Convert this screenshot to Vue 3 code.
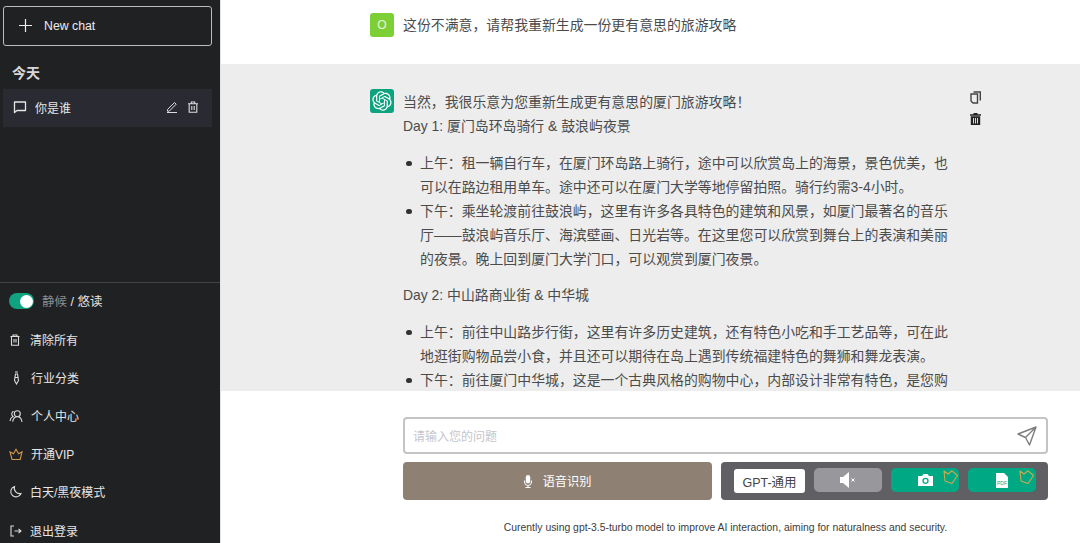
<script setup>
const menu = [
  { label: '清除所有', icon: 'trash', gap: 'g1' },
  { label: '行业分类', icon: 'tie', gap: 'g3' },
  { label: '个人中心', icon: 'user', gap: 'g2' },
  { label: '开通VIP', icon: 'crown', gap: 'g2' },
  { label: '白天/黑夜模式', icon: 'moon', gap: 'g1' },
  { label: '退出登录', icon: 'logout', gap: 'g1' }
]
const logo = 'M37.5324 16.8707C37.9808 15.5241 38.1363 14.0974 37.9886 12.6859C37.8409 11.2744 37.3934 9.91076 36.676 8.68622C35.6126 6.83404 33.9882 5.3676 32.0373 4.4985C30.0864 3.62941 27.9098 3.40259 25.8215 3.85078C24.8796 2.7893 23.7219 1.94125 22.4257 1.36341C21.1295 0.785575 19.7249 0.491269 18.3058 0.500197C16.1708 0.495044 14.0893 1.16803 12.3614 2.42214C10.6335 3.67624 9.34853 5.44666 8.6917 7.47815C7.30085 7.76286 5.98686 8.3414 4.8377 9.17505C3.68854 10.0087 2.73073 11.0782 2.02839 12.312C0.956464 14.1591 0.498905 16.2988 0.721698 18.4228C0.944492 20.5467 1.83612 22.5449 3.268 24.1293C2.81966 25.4759 2.66413 26.9026 2.81182 28.3141C2.95951 29.7256 3.40701 31.0892 4.12437 32.3138C5.18791 34.1659 6.8123 35.6322 8.76321 36.5013C10.7141 37.3704 12.8907 37.5973 14.9789 37.1492C15.9208 38.2107 17.0786 39.0587 18.3747 39.6366C19.6709 40.2144 21.0755 40.5087 22.4946 40.4998C24.6307 40.5054 26.7133 39.8321 28.4418 38.5772C30.1704 37.3223 31.4556 35.5506 32.1119 33.5179C33.5027 33.2332 34.8167 32.6547 35.9659 31.821C37.115 30.9874 38.0728 29.9178 38.7752 28.684C39.8458 26.8371 40.3023 24.6979 40.0789 22.5748C39.8556 20.4517 38.9639 18.4544 37.5324 16.8707ZM22.4978 37.8849C20.7443 37.8874 19.0459 37.2733 17.6994 36.1501C17.7601 36.117 17.8666 36.0586 17.936 36.0161L25.9004 31.4156C26.1003 31.3019 26.2663 31.137 26.3813 30.9378C26.4964 30.7386 26.5563 30.5124 26.5549 30.2825V19.0542L29.9213 20.998C29.9389 21.0068 29.9541 21.0198 29.9656 21.0359C29.977 21.052 29.9842 21.0707 29.9867 21.0902V30.3889C29.9842 32.375 29.1946 34.2791 27.7909 35.6841C26.3872 37.0892 24.4838 37.8806 22.4978 37.8849ZM6.39227 31.0064C5.51397 29.4888 5.19742 27.7107 5.49804 25.9832C5.55718 26.0187 5.66048 26.0818 5.73461 26.1244L13.699 30.7248C13.8975 30.8408 14.1233 30.902 14.3532 30.902C14.583 30.902 14.8088 30.8408 15.0073 30.7248L24.731 25.1103V28.9979C24.7321 29.0177 24.7283 29.0376 24.7199 29.0556C24.7115 29.0736 24.6988 29.0893 24.6829 29.1012L16.6317 33.7497C14.9096 34.7416 12.8643 35.0097 10.9447 34.4954C9.02506 33.9811 7.38785 32.7263 6.39227 31.0064ZM4.29707 13.6194C5.17156 12.0998 6.55279 10.9364 8.19885 10.3327C8.19885 10.4013 8.19491 10.5228 8.19491 10.6071V19.808C8.19351 20.0378 8.25334 20.2638 8.36823 20.4629C8.48312 20.6619 8.64893 20.8267 8.84863 20.9404L18.5723 26.5542L15.206 28.4979C15.1894 28.5089 15.1703 28.5155 15.1505 28.5173C15.1307 28.5191 15.1107 28.516 15.0924 28.5082L7.04046 23.8557C5.32135 22.8601 4.06716 21.2235 3.55289 19.3046C3.03862 17.3858 3.30624 15.3413 4.29707 13.6194ZM31.955 20.0556L22.2312 14.4411L25.5976 12.4981C25.6142 12.4872 25.6333 12.4805 25.6531 12.4787C25.6729 12.4769 25.6928 12.4801 25.7111 12.4879L33.7631 17.1364C34.9967 17.849 36.0017 18.8982 36.6606 20.1613C37.3194 21.4244 37.6047 22.849 37.4832 24.2684C37.3617 25.6878 36.8382 27.0432 35.9743 28.1759C35.1103 29.3086 33.9415 30.1717 32.6047 30.6641C32.6047 30.5947 32.6047 30.4733 32.6047 30.3889V21.188C32.6066 20.9586 32.5474 20.7328 32.4332 20.5338C32.319 20.3348 32.154 20.1698 31.955 20.0556ZM35.3055 15.0128C35.2464 14.9765 35.1431 14.9142 35.069 14.8717L27.1045 10.2712C26.906 10.1554 26.6803 10.0943 26.4504 10.0943C26.2206 10.0943 25.9948 10.1554 25.7963 10.2712L16.0726 15.8858V11.9982C16.0715 11.9783 16.0753 11.9585 16.0837 11.9405C16.0921 11.9225 16.1048 11.9068 16.1207 11.8949L24.1719 7.25025C25.4053 6.53903 26.8158 6.19376 28.2383 6.25482C29.6608 6.31589 31.0364 6.78077 32.2044 7.59508C33.3723 8.40939 34.2842 9.53945 34.8334 10.8531C35.3826 12.1667 35.5464 13.6095 35.3055 15.0128ZM14.2424 21.9419L10.8752 19.9981C10.8576 19.9893 10.8423 19.9763 10.8309 19.9602C10.8195 19.9441 10.8122 19.9254 10.8098 19.9058V10.6071C10.8107 9.18295 11.2173 7.78848 11.9819 6.58696C12.7466 5.38544 13.8377 4.42659 15.1275 3.82264C16.4173 3.21869 17.8524 2.99464 19.2649 3.1767C20.6775 3.35876 22.0089 3.93941 23.1034 4.85067C23.0427 4.88379 22.937 4.94215 22.8668 4.98473L14.9024 9.58517C14.7025 9.69878 14.5366 9.86356 14.4215 10.0626C14.3065 10.2616 14.2466 10.4877 14.2479 10.7175L14.2424 21.9419ZM16.071 17.9991L20.4018 15.4978L24.7325 17.9975V22.9985L20.4018 25.4983L16.071 22.9985V17.9991Z'
</script>

<template>
  <div class="app">
    <aside class="side">
      <div class="top">
        <button class="new">
          <svg width="13" height="13" viewBox="0 0 13 13" fill="none" stroke="#eee" stroke-width="1.2"><path d="M6.500 0v13M0 6.500h13"/></svg>
          <span>New chat</span>
        </button>
        <div class="today">今天</div>
        <div class="chat">
          <svg width="14" height="14" viewBox="0 0 14 14" fill="none" stroke="#e6e6e6" stroke-width="1.3"><path d="M1.500 2h11v8.500H4L1.500 12.500z" stroke-linejoin="round"/></svg>
          <span class="chat-t">你是谁</span>
          <svg class="ci" width="12" height="12" viewBox="0 0 12 12" fill="none" stroke="#ddd" stroke-width="1"><path d="M1.500 8.500 8.500 1.500l1.700 1.700-7 7H1.500zM1 11.500h10"/></svg>
          <svg width="12" height="12" viewBox="0 0 12 12" fill="none" stroke="#ddd" stroke-width="1.100"><path d="M1 2.800h10M4.300 2.800V1h3.400v1.800M2.200 2.800v8.500h7.600V2.800M4.800 5v4M7.200 5v4"/></svg>
        </div>
      </div>
      <div class="bottom">
        <div class="toggle-row">
          <span class="switch"><i></i></span>
          <span class="tl"><em>静候</em> / 悠读</span>
        </div>
        <div v-for="m in menu" :key="m.label" class="item" :class="m.gap">
          <svg width="14" height="14" viewBox="0 0 14 14" fill="none" stroke="#ddd" stroke-width="1.100">
            <path v-if="m.icon === 'trash'" d="M1.500 3.500h9M4 3.500V2h4v1.500M2.500 3.500v8.800h7V3.500M5 6v3.500M7 6v3.500"/>
            <path v-else-if="m.icon === 'tie'" d="M6 1h3M6 3h3M6.500 3 5.500 9.500 7.500 13l2-3.500L8.500 3M6 6.500h3"/>
            <path v-else-if="m.icon === 'user'" d="M8.300 1.800a3 3 0 1 1 0 6 3 3 0 0 1 0-6zM3.700 12.800c.4-3 2.200-5 4.600-5s4.200 2 4.700 5M4.600 2.300a3 3 0 0 0-.6 5.200C2.300 8.300 1.200 10 1 12"/>
            <path v-else-if="m.icon === 'crown'" stroke="#d39a4e" d="M3 12.500h8.200L13 4.800 9.700 6.800 7 2.300 4.400 6.800 1 4.800z"/>
            <path v-else-if="m.icon === 'moon'" d="M5.500 1.500a5.300 5.300 0 1 0 6.500 7A5.500 5.500 0 0 1 5.500 1.500z"/>
            <path v-else d="M5 2H2v10h3M5.500 7H12M9.500 4.800 12 7l-2.500 2.200"/>
          </svg>
          <span>{{ m.label }}</span>
        </div>
      </div>
    </aside>

    <main class="main">
      <div class="msgs">
        <section class="msg user">
          <div class="av green">O</div>
          <div class="txt">这份不满意，请帮我重新生成一份更有意思的旅游攻略</div>
        </section>
        <section class="msg bot">
          <div class="av teal">
            <svg width="20" height="20" viewBox="0 0 41 41" fill="#fff"><path :d="logo"/></svg>
          </div>
          <div class="txt body">
            <p class="tight">当然，我很乐意为您重新生成更有意思的厦门旅游攻略！<br>Day 1: 厦门岛环岛骑行 &amp; 鼓浪屿夜景</p>
            <ul>
              <li>上午：租一辆自行车，在厦门环岛路上骑行，途中可以欣赏岛上的海景，景色优美，也可以在路边租用单车。途中还可以在厦门大学等地停留拍照。骑行约需3-4小时。</li>
              <li>下午：乘坐轮渡前往鼓浪屿，这里有许多各具特色的建筑和风景，如厦门最著名的音乐厅——鼓浪屿音乐厅、海滨壁画、日光岩等。在这里您可以欣赏到舞台上的表演和美丽的夜景。晚上回到厦门大学门口，可以观赏到厦门夜景。</li>
            </ul>
            <p>Day 2: 中山路商业街 &amp; 中华城</p>
            <ul>
              <li>上午：前往中山路步行街，这里有许多历史建筑，还有特色小吃和手工艺品等，可在此地逛街购物品尝小食，并且还可以期待在岛上遇到传统福建特色的舞狮和舞龙表演。</li>
              <li>下午：前往厦门中华城，这是一个古典风格的购物中心，内部设计非常有特色，是您购物的好去处。</li>
            </ul>
          </div>
          <div class="tools">
            <svg width="11" height="13" viewBox="0 0 11 13" fill="none" stroke="#444" stroke-width="1.400"><path d="M3.500 1h6.800v8.500M1 3h6.500v9H3L1 10z"/></svg>
            <svg width="11" height="12" viewBox="0 0 11 12"><path fill="#222" d="M3.500 0h4v1.200H11v1.500H0V1.200h3.500zM.8 3.300h9.400V12H.8z"/><path stroke="#ddd" d="M3.500 5v5.500M5.500 5v5.500M7.500 5v5.500"/></svg>
          </div>
        </section>
      </div>

      <div class="composer">
        <div class="inp">
          <span class="ph">请输入您的问题</span>
          <svg width="20" height="20" viewBox="0 0 20 20" fill="none" stroke="#7d7d7d" stroke-width="1.400" stroke-linejoin="round"><path d="M1 8 19 1 12.500 19 8.500 11.500zM19 1 8.500 11.500"/></svg>
        </div>
        <div class="actions">
          <button class="voice">
            <svg width="8" height="13" viewBox="0 0 8 13" fill="#fff"><rect x="1.800" y="0" width="4.400" height="8.500" rx="2.200"/><path d="M.5 5.500v1.500a3.500 3.500 0 0 0 7 0V5.500" fill="none" stroke="#fff"/><path d="M3.500 10.500h1V12h2v1h-5v-1h2z"/></svg>
            <span>语音识别</span>
          </button>
          <div class="panel">
            <span class="model">GPT-通用</span>
            <span class="pb grey">
              <svg width="18" height="18" viewBox="0 0 18 18" fill="#fff"><path d="M1 6h3l6-5v16l-6-5H1z"/><path d="M12.500 7.500l3 3M15.500 7.500l-3 3" stroke="#fff"/></svg>
            </span>
            <span class="pb teal2">
              <svg width="15" height="12" viewBox="0 0 15 12"><path fill="#fff" d="M0 2h4L5.500 0h4L11 2h4v10H0z"/><circle cx="7.500" cy="6.800" r="2.500" fill="none" stroke="#00a884" stroke-width="1.300"/></svg>
              <svg class="crown c1" width="16" height="14" viewBox="0 0 16 14" fill="none" stroke="#cda94f" stroke-width="1.100" stroke-linejoin="round"><path d="M2 1 6 4 10 .8 15.500 5.500 10 13.500 3 11z"/></svg>
            </span>
            <span class="pb teal2">
              <svg width="12" height="15" viewBox="0 0 12 15"><path fill="#fff" d="M0 0h8l4 4v11H0z"/><text x="6" y="11.500" font-size="5" text-anchor="middle" fill="#00a884" font-family="Liberation Sans">PDF</text></svg>
              <svg class="crown c2" width="16" height="14" viewBox="0 0 16 14" fill="none" stroke="#cda94f" stroke-width="1.100" stroke-linejoin="round"><path d="M2 1 6 4 10 .8 15.500 5.500 10 13.500 3 11z"/></svg>
            </span>
          </div>
        </div>
        <div class="foot">Curently using gpt-3.5-turbo model to improve AI interaction, aiming for naturalness and security.</div>
      </div>
    </main>
  </div>
</template>

<style>
html, body { margin: 0; height: 100%; overflow: hidden; background: #fff; }
</style>

<style scoped>
.app { display: flex; width: 1080px; height: 543px; overflow: hidden; font-family: "Liberation Sans", "Noto Sans CJK SC", sans-serif; font-size: 13.9px; color: #444; }
.side { width: 220px; flex: none; background: #202123; border-right: 1px solid #e5e5e5; display: flex; flex-direction: column; justify-content: space-between; color: #e6e6e6; overflow: hidden; }
.top { padding: 6px 8px 0 3px; }
.new { width: 100%; height: 40px; box-sizing: border-box; display: flex; align-items: center; gap: 12px; padding: 0 15px 1px; background: transparent; border: 1px solid #bdbdbd; border-radius: 3px; color: #ececec; font: 12.300px "Liberation Sans", sans-serif; }
.today { margin: 18px 0 0 9px; font-weight: 700; font-size: 14px; line-height: 18px; color: #d8d8d8; height: 25px; }
.chat { height: 38px; box-sizing: border-box; background: #2a2b32; display: flex; align-items: center; padding: 0 13px 2px 10px; gap: 8px; font-size: 12px; }
.chat-t { flex: 1; }
.ci { margin-right: 1px; }
.bottom { border-top: 1px solid #424347; height: 261px; padding: 0 0 0 9px; box-sizing: border-box; flex: none; }
.toggle-row { display: flex; align-items: center; gap: 8px; height: 36px; margin-bottom: 1.500px; font-size: 12.500px; }
.switch { width: 25px; height: 16px; border-radius: 8px; background: #10a37f; position: relative; }
.switch i { position: absolute; right: 1px; top: 1.500px; width: 13px; height: 13px; border-radius: 50%; background: #fff; }
.tl { padding-bottom: 2px; }
.tl em { font-style: normal; color: #8d8d8d; }
.item { height: 38.200px; display: flex; align-items: center; font-size: 12px; color: #e6e6e6; }
.item span { padding-bottom: 1px; }
.item.g1 { gap: 7px; }
.item.g2 { gap: 8px; }
.item.g3 { gap: 8px; }
.main { flex: 1; min-width: 0; display: flex; flex-direction: column; }
.msgs { height: 391px; overflow: hidden; flex: none; }
.msg { display: flex; }
.user { height: 64px; box-sizing: border-box; padding: 13px 0 0 149px; background: #fff; }
.bot { background: #ededed; padding: 25px 0 0 149px; min-height: 327px; position: relative; }
.av { width: 24px; height: 24px; flex: none; border-radius: 3px; display: flex; align-items: center; justify-content: center; color: #eaf6dc; font-size: 12px; }
.green { background: #7ccf35; }
.teal { background: #0ea37f; }
.txt { margin-left: 9px; line-height: 24px; color: #4b4b4b; }
.body { width: 548px; margin-top: 1px; }
.body p { margin: 0 0 13px; }
.body ul { margin: 0 0 12px; padding: 0 0 0 17px; list-style: none; }
.body li { position: relative; }
.body li::before { content: ""; position: absolute; left: -14px; top: 9.500px; width: 5.500px; height: 5.500px; border-radius: 50%; background: #333; }
.tools { position: absolute; left: 749px; top: 27px; display: flex; flex-direction: column; gap: 9px; }
.composer { flex: 1; padding: 26px 32px 0 182px; box-sizing: border-box; }
.inp { height: 37px; box-sizing: border-box; border: 2px solid #c4c4c4; border-radius: 4px; display: flex; align-items: center; justify-content: space-between; padding: 0 9px 0 8px; background: #fff; }
.ph { color: #c4c6cc; font-size: 12px; padding-bottom: 1px; }
.actions { display: flex; gap: 9px; margin-top: 8px; height: 38px; }
.voice { width: 309px; border: 0; background: #8e8073; color: #fff; border-radius: 4px; display: flex; align-items: center; justify-content: center; gap: 11px; font: 12.200px "Liberation Sans", "Noto Sans CJK SC", sans-serif; padding-bottom: 1px; }
.panel { flex: 1; background: #606064; border-radius: 4px; display: flex; align-items: center; padding: 0 12px 0 13px; gap: 9px; }
.model { width: 71px; height: 24px; background: #fff; border-radius: 3px; color: #444; font-size: 12.500px; display: flex; align-items: center; justify-content: center; }
.pb { width: 68px; height: 24px; border-radius: 5px; display: flex; align-items: center; justify-content: center; position: relative; margin-bottom: 2px; }
.grey { background: #98989c; }
.teal2 { background: #00a884; }
.crown { position: absolute; top: 2px; }
.c1 { right: 1px; }
.c2 { right: 2px; }
.foot { margin-top: 21px; font-size: 10.400px; line-height: 14px; color: #3c3c3c; text-align: center; white-space: nowrap; }
</style>
